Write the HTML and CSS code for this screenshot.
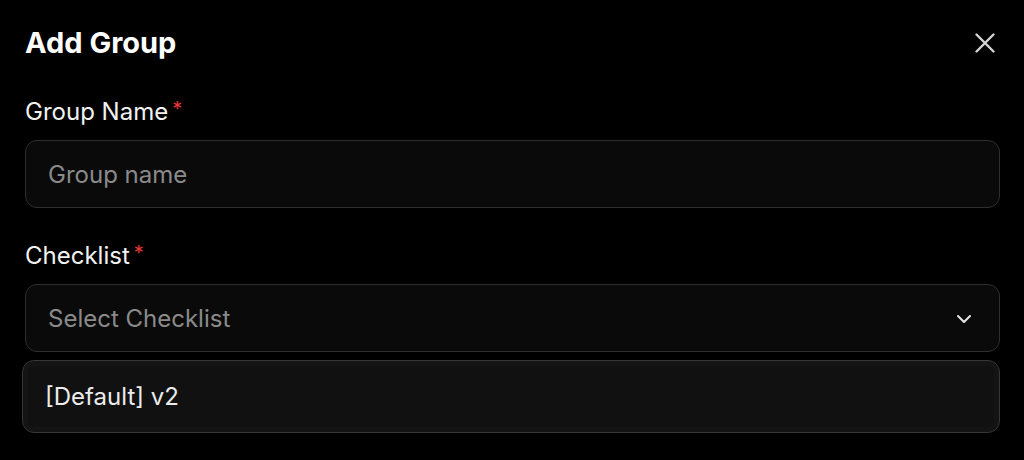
FILE: index.html
```html
<!DOCTYPE html>
<html>
<head>
<meta charset="utf-8">
<link rel="stylesheet" href="styles.css">
</head>
<body>
<div class="dialog">
  <div class="header">
    <h1 class="title">Add Group</h1>
    <button class="close" aria-label="Close">
      <svg width="22" height="22" viewBox="0 0 22 22"><path d="M2.5 2.5 L19.5 19.5 M19.5 2.5 L2.5 19.5" stroke="#d4d4d4" stroke-width="2.4" stroke-linecap="round"/></svg>
    </button>
  </div>
  <label class="label label-first">Group Name<span class="req">*</span></label>
  <div class="field"><span class="placeholder">Group name</span></div>
  <label class="label label-second">Checklist<span class="req">*</span></label>
  <div class="field select"><span class="placeholder">Select Checklist</span>
    <svg class="chev" width="18" height="18" viewBox="0 0 18 18"><path d="M3 6 L9 12 L15 6" fill="none" stroke="#e5e5e5" stroke-width="2" stroke-linecap="round" stroke-linejoin="round"/></svg>
  </div>
  <div class="menu"><div class="option">[Default] v2</div></div>
</div>
</body>
</html>
```
FILE: styles.css
```css
html, body {
  margin: 0;
  padding: 0;
  background: #000;
  width: 1024px;
  height: 460px;
  overflow: hidden;
  font-family: Inter, "Noto Sans", sans-serif;
}
.dialog {
  display: flex;
  flex-direction: column;
  padding: 24px 24px 0 25px;
}
.header {
  display: flex;
  align-items: center;
  justify-content: space-between;
  height: 38px;
}
.title {
  margin: 0;
  font-size: 29px;
  line-height: 38px;
  font-weight: 700;
  color: #fff;
  letter-spacing: 0;
}
.close {
  background: none;
  border: none;
  padding: 0;
  margin-right: 4px;
  width: 22px;
  height: 22px;
  display: flex;
}
.label {
  font-size: 24px;
  line-height: 30px;
  color: #f2f2f2;
  font-weight: 400;
}
.label-first { margin-top: 35px; }
.label-second { margin-top: 33px; }
.req {
  color: #e5363a;
  margin-left: 4px;
  font-size: 20px;
  vertical-align: 4px;
  line-height: 1;
}
.field {
  margin-top: 13px;
  height: 68px;
  box-sizing: border-box;
  border: 1.5px solid #2e2e2e;
  border-radius: 12px;
  background: #0a0a0a;
  display: flex;
  align-items: center;
  padding: 0 26px 0 22px;
}
.placeholder {
  font-size: 24px;
  color: #8a8a8a;
}
.select {
  justify-content: space-between;
}
.chev { margin-top: 2px; }
.menu {
  margin-top: 8px;
  margin-left: -3px;
  height: 73px;
  box-sizing: border-box;
  border: 1.5px solid #363636;
  border-radius: 12px;
  background: #111;
  box-shadow: inset 0 0 0 5px #141414;
  display: flex;
  align-items: center;
  padding: 0 22px;
}
.option {
  font-size: 24px;
  color: #ececec;
}
```
